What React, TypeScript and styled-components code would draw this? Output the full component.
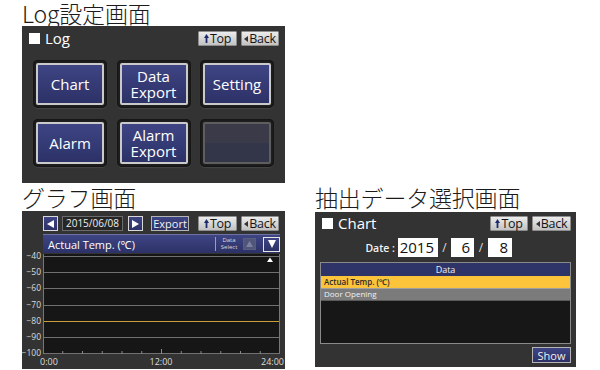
import styled, { createGlobalStyle } from 'styled-components';

const GlobalStyle = createGlobalStyle`
  html, body {
    margin: 0;
    padding: 0;
    background: #ffffff;
  }
  body {
    font-family: "Open Sans", "Noto Sans", sans-serif;
  }
`;

const NAVY = 'linear-gradient(#3f4584, #2c3167)';

const Page = styled.div`
  display: grid;
  grid-template-columns: 263px 261px;
  grid-template-rows: 183px auto;
  column-gap: 30px;
  padding-left: 22px;
  width: 600px;
  height: 370px;
  box-sizing: border-box;
`;

const Section = styled.section`
  display: flex;
  flex-direction: column;
`;

const Title = styled.h2<{ $h: number }>`
  margin: 0;
  height: ${(p) => p.$h}px;
  line-height: ${(p) => p.$h}px;
  font-family: "Noto Sans CJK JP", "Noto Sans", sans-serif;
  font-weight: 300;
  font-size: 23px;
  color: #1b1b1b;
  white-space: nowrap;
  letter-spacing: -0.2px;
`;

const Panel = styled.div<{ $h: number }>`
  height: ${(p) => p.$h}px;
  background: #333333;
  display: flex;
  flex-direction: column;
`;

const Header = styled.div<{ $pad: string }>`
  display: flex;
  align-items: center;
  height: 15px;
  padding: ${(p) => p.$pad};
`;

const Check = styled.span`
  width: 11px;
  height: 11px;
  background: #ffffff;
  flex: none;
`;

const HeaderLabel = styled.span`
  margin-left: 5px;
  color: #ffffff;
  font-size: 15px;
  line-height: 15px;
`;

const NavBtn = styled.button<{ $w: number; $first?: boolean }>`
  width: ${(p) => p.$w}px;
  height: 15px;
  margin-left: ${(p) => (p.$first ? 'auto' : '4px')};
  padding: 0;
  display: flex;
  align-items: center;
  justify-content: center;
  gap: 1px;
  border: 1px solid #8d8d8d;
  border-radius: 1px;
  background: linear-gradient(#ececec, #c2c2c2);
  color: #151515;
  font-family: inherit;
  font-size: 12.5px;
  line-height: 13px;
  letter-spacing: -0.3px;
`;

const KeyGrid = styled.div`
  display: grid;
  grid-template-columns: repeat(3, 74px);
  grid-auto-rows: 48px;
  column-gap: 9.5px;
  row-gap: 11px;
  margin: 14px 0 0 11px;
`;

const Bezel = styled.div`
  padding: 3px;
  border-radius: 5px;
  background: #1e1e1e;
  box-shadow: inset 0 0 2px #000, 0 1px 1px #454545;
  display: flex;
`;

const Key = styled.button<{ $empty?: boolean }>`
  flex: 1;
  margin: 0;
  padding: 0;
  border: 2px solid ${(p) => (p.$empty ? '#5e5e5e' : '#cacaca')};
  border-radius: 2px;
  background: ${(p) => (p.$empty ? 'linear-gradient(#3b3a48 50%, #323648 50%)' : NAVY)};
  color: #ffffff;
  font-family: inherit;
  font-size: 15px;
  line-height: 16px;
  text-align: center;
`;

const ToolBar = styled.div`
  display: flex;
  align-items: center;
  height: 15px;
  padding: 5px 6px 0 21px;
`;

const ArrowBtn = styled.button<{ $ml?: number }>`
  width: 15px;
  height: 15px;
  margin: 0 0 0 ${(p) => p.$ml || 0}px;
  padding: 0;
  border: 1px solid #d8d8d8;
  background: ${NAVY};
  display: flex;
  align-items: center;
  justify-content: center;
`;

const DateBox = styled.div`
  width: 61px;
  height: 15px;
  margin-left: 4px;
  box-sizing: border-box;
  border: 1px solid #6b6b6b;
  background: #262626;
  color: #eeeeee;
  font-size: 10px;
  line-height: 13px;
  text-align: center;
`;

const BlueBtn = styled.button<{ $w: number; $h: number; $ml?: string }>`
  width: ${(p) => p.$w}px;
  height: ${(p) => p.$h}px;
  margin: 0 0 0 ${(p) => p.$ml || '0'};
  padding: 0;
  border: 1px solid #b4b4b4;
  background: ${NAVY};
  color: #f0f0f0;
  font-family: inherit;
  font-size: 11px;
  line-height: 13px;
`;

const ChartHead = styled.div`
  display: flex;
  align-items: center;
  height: 19px;
  margin: 3px 5px 0 21px;
  box-sizing: border-box;
  border-top: 1px solid #6d72a3;
  background: ${NAVY};
  position: relative;
  z-index: 1;
`;

const ChartTitle = styled.span`
  padding-left: 5px;
  color: #ffffff;
  font-size: 11px;
  flex: 1;
`;

const Sep = styled.span`
  width: 1px;
  height: 14px;
  background: #9a9dc0;
`;

const DataSelect = styled.span`
  margin-left: 3px;
  width: 20px;
  color: #dcdcdc;
  font-size: 6px;
  line-height: 7px;
  text-align: center;
`;

const SmallArrow = styled.span<{ $off?: boolean }>`
  width: ${(p) => (p.$off ? 13 : 17)}px;
  height: ${(p) => (p.$off ? 12 : 15)}px;
  margin-left: ${(p) => (p.$off ? 4 : 7)}px;
  box-sizing: border-box;
  display: flex;
  align-items: center;
  justify-content: center;
  border: 1px solid ${(p) => (p.$off ? '#5a5e7e' : '#e6e6e6')};
  background: ${(p) => (p.$off ? '#50557a' : NAVY)};
`;

const Plot = styled.svg`
  display: block;
  margin-top: -3px;
`;

const DateRow = styled.div`
  display: flex;
  align-items: center;
  height: 19px;
  margin: 7px 0 0 49px;
`;

const DateLabel = styled.span`
  width: 34px;
  padding-right: 3px;
  box-sizing: border-box;
  text-align: right;
  color: #f2f2f2;
  font-size: 10.5px;
  font-weight: 600;
  white-space: nowrap;
`;

const NumBox = styled.span<{ $w: number }>`
  width: ${(p) => p.$w}px;
  height: 19px;
  box-sizing: border-box;
  padding-right: 4px;
  background: #ffffff;
  color: #111111;
  font-size: 15px;
  line-height: 19px;
  text-align: right;
`;

const Slash = styled.span<{ $w: number }>`
  width: ${(p) => p.$w}px;
  text-align: center;
  color: #dddddd;
  font-size: 12px;
`;

const Table = styled.div`
  height: 82px;
  margin: 5px 5px 0 5px;
  box-sizing: border-box;
  border: 1px solid #8a8a8a;
  background: #171717;
  display: flex;
  flex-direction: column;
`;

const TableHead = styled.div`
  height: 13px;
  background: #2f3468;
  color: #f0f0f0;
  font-size: 9px;
  line-height: 13px;
  text-align: center;
`;

const Row = styled.div<{ $sel?: boolean }>`
  height: ${(p) => (p.$sel ? 12 : 13)}px;
  box-sizing: border-box;
  padding-left: 3px;
  border-top: 1px solid ${(p) => (p.$sel ? '#f9c23c' : '#a0a0a0')};
  border-bottom: 1px solid ${(p) => (p.$sel ? '#f9c23c' : '#5a5a5a')};
  background: ${(p) => (p.$sel ? '#fbc43b' : '#7b7b7b')};
  color: ${(p) => (p.$sel ? '#2a2a2a' : '#f2f2f2')};
  font-size: 8px;
  font-weight: ${(p) => (p.$sel ? 600 : 400)};
  line-height: 10px;
  white-space: nowrap;
`;

const Footer = styled.div`
  display: flex;
  justify-content: flex-end;
  padding: 3px 5px 0 0;
`;

const UpIcon = () => (
  <svg width="5" height="9" viewBox="0 0 5 9">
    <path d="M2.5 0 L5 4 H3.4 V9 H1.6 V4 H0 Z" fill="#1d2a6b" />
  </svg>
);

const BackIcon = () => (
  <svg width="4" height="6" viewBox="0 0 4 6">
    <path d="M4 0 V6 L0 3 Z" fill="#333" />
  </svg>
);

const Tri = ({ dir, color = '#fff', w = 7, h = 8 }: { dir: 'l' | 'r' | 'u' | 'd'; color?: string; w?: number; h?: number }) => {
  const d = {
    l: `M${w} 0 V${h} L0 ${h / 2} Z`,
    r: `M0 0 V${h} L${w} ${h / 2} Z`,
    u: `M0 ${h} H${w} L${w / 2} 0 Z`,
    d: `M0 0 H${w} L${w / 2} ${h} Z`,
  }[dir];
  return (
    <svg width={w} height={h} viewBox={`0 0 ${w} ${h}`}>
      <path d={d} fill={color} />
    </svg>
  );
};

const TopBack = ({ top, back }: { top: number; back: number }) => (
  <>
    <NavBtn $w={top} $first>
      <UpIcon />
      Top
    </NavBtn>
    <NavBtn $w={back}>
      <BackIcon />
      Back
    </NavBtn>
  </>
);

// plot drawn 4px lower inside the svg so the top label has room
const OFF = 4;
const gridY = [2, 18, 34, 51, 67, 83, 99];
const yLabels = ['−40', '−50', '−60', '−70', '−80', '−90', '−100'];
const FONT = 'Open Sans, sans-serif';

const ChartPlot = () => {
  const x0 = 21;
  const x1 = 258;
  const ticks = Array.from({ length: 11 }, (_, i) => x0 + ((i + 1) * (x1 - x0)) / 12);
  return (
    <Plot width="263" height="118" viewBox="0 0 263 118">
      <rect x={x0} y={OFF} width={x1 - x0} height={100} fill="#161616" />
      {gridY.map((y, i) => (
        <line key={y} x1={x0} x2={x1} y1={y + OFF + 0.5} y2={y + OFF + 0.5} stroke={i === 4 ? '#c9a038' : '#707070'} strokeWidth="1" />
      ))}
      <line x1={x0 + 0.5} x2={x0 + 0.5} y1={OFF} y2={OFF + 100} stroke="#777" />
      <line x1={x1 - 0.5} x2={x1 - 0.5} y1={OFF} y2={OFF + 100} stroke="#777" />
      {ticks.map((x, i) => (
        <line key={x} x1={x} x2={x} y1={OFF + (i === 5 ? 95 : 97)} y2={OFF + 100} stroke="#8a8a8a" />
      ))}
      <path d={`M245 ${OFF + 8} L248 ${OFF + 3.5} L251 ${OFF + 8} Z`} fill="#ffffff" />
      {yLabels.map((t, i) => (
        <text key={t} x="19" y={gridY[i] + OFF + 3} textAnchor="end" fill="#dcdcdc" fontSize="8.5" fontFamily={FONT}>
          {t}
        </text>
      ))}
      <text x="18" y={OFF + 111} fill="#dcdcdc" fontSize="9" fontFamily={FONT}>0:00</text>
      <text x="139" y={OFF + 111} textAnchor="middle" fill="#dcdcdc" fontSize="9" fontFamily={FONT}>12:00</text>
      <text x="262" y={OFF + 111} textAnchor="end" fill="#dcdcdc" fontSize="9" fontFamily={FONT}>24:00</text>
    </Plot>
  );
};

export default function App() {
  return (
    <Page>
      <GlobalStyle />
      <Section>
        <Title $h={26}>Log設定画面</Title>
        <Panel $h={157}>
          <Header $pad="5px 6px 0 7px">
            <Check />
            <HeaderLabel>Log</HeaderLabel>
            <TopBack top={39} back={38} />
          </Header>
          <KeyGrid>
            <Bezel><Key>Chart</Key></Bezel>
            <Bezel><Key>Data<br />Export</Key></Bezel>
            <Bezel><Key>Setting</Key></Bezel>
            <Bezel><Key>Alarm</Key></Bezel>
            <Bezel><Key>Alarm<br />Export</Key></Bezel>
            <Bezel><Key $empty /></Bezel>
          </KeyGrid>
        </Panel>
      </Section>
      <div />
      <Section>
        <Title $h={28}>グラフ画面</Title>
        <Panel $h={158}>
          <ToolBar>
            <ArrowBtn><Tri dir="l" /></ArrowBtn>
            <DateBox>2015/06/08</DateBox>
            <ArrowBtn $ml={5}><Tri dir="r" /></ArrowBtn>
            <BlueBtn $w={38} $h={15} $ml="8px">Export</BlueBtn>
            <TopBack top={39} back={38} />
          </ToolBar>
          <ChartHead>
            <ChartTitle>Actual Temp. (℃)</ChartTitle>
            <Sep />
            <DataSelect>Data<br />Select</DataSelect>
            <SmallArrow $off><Tri dir="u" color="#7d81a0" w={7} h={6} /></SmallArrow>
            <SmallArrow><Tri dir="d" w={8} h={8} /></SmallArrow>
          </ChartHead>
          <ChartPlot />
        </Panel>
      </Section>
      <Section>
        <Title $h={29}>抽出データ選択画面</Title>
        <Panel $h={155}>
          <Header $pad="4px 5px 0 7px">
            <Check />
            <HeaderLabel>Chart</HeaderLabel>
            <TopBack top={38} back={39} />
          </Header>
          <DateRow>
            <DateLabel>Date :</DateLabel>
            <NumBox $w={40}>2015</NumBox>
            <Slash $w={13}>/</Slash>
            <NumBox $w={23}>6</NumBox>
            <Slash $w={14}>/</Slash>
            <NumBox $w={24}>8</NumBox>
          </DateRow>
          <Table>
            <TableHead>Data</TableHead>
            <Row $sel>Actual Temp. (℃)</Row>
            <Row>Door Opening</Row>
          </Table>
          <Footer>
            <BlueBtn $w={39} $h={16}>Show</BlueBtn>
          </Footer>
        </Panel>
      </Section>
    </Page>
  );
}
